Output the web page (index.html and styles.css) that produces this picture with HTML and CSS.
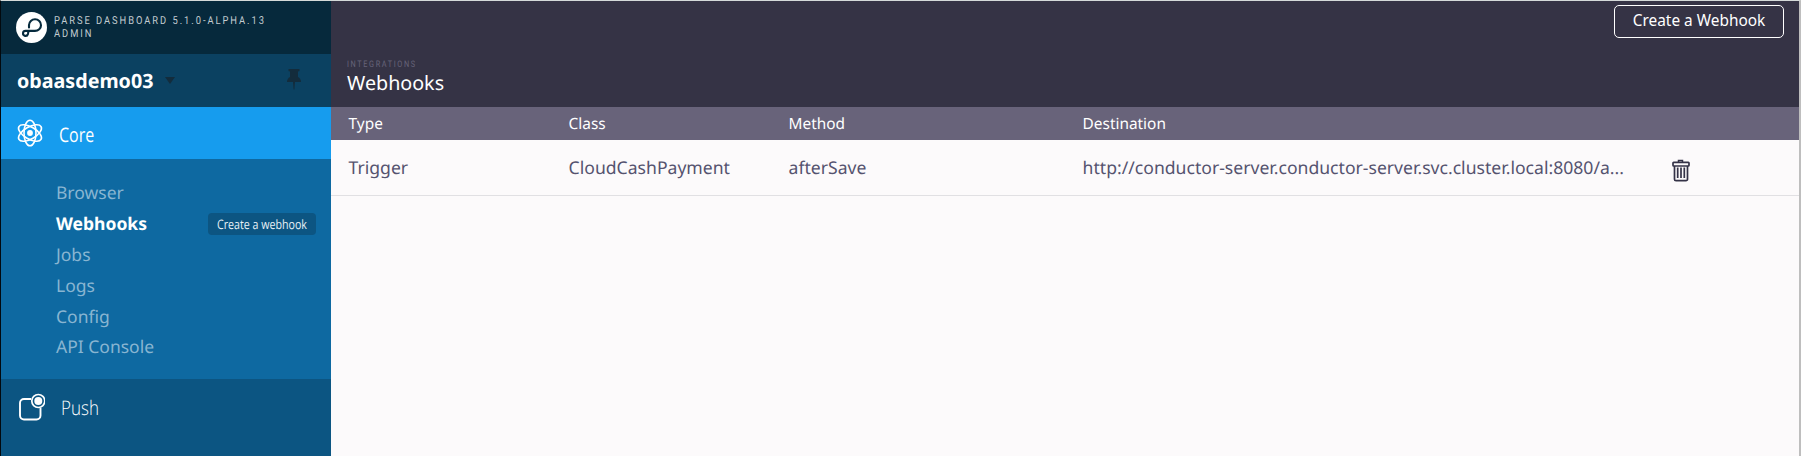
FILE: index.html
```
<!DOCTYPE html>
<html lang="en">
<head>
<meta charset="utf-8">
<title>Webhooks - Parse Dashboard</title>
<link rel="stylesheet" href="styles.css">
</head>
<body>
<div class="window">
  <aside class="sidebar">
    <header class="brand">
      <svg class="brand-logo" viewBox="0 0 31 31" width="31" height="31">
        <circle cx="15.500" cy="15.500" r="15.500" fill="#fff"/>
        <path d="M13 15.500V13a6 5.800 0 1 1 6 5.900H9.500a2.500 2.500 0 1 0 2.400 3.200Q12.300 20.500 12.500 19" fill="none" stroke="#062a3d" stroke-width="2.100" stroke-linecap="round" stroke-linejoin="round"/>
      </svg>
      <div class="brand-text"><span class="version">PARSE DASHBOARD 5.1.0-ALPHA.13</span><span class="role">ADMIN</span></div>
    </header>
    <div class="app">
      <span class="app-name">obaasdemo03</span>
      <svg class="caret" width="10" height="7" viewBox="0 0 10 7"><path d="M0 0h10L5 7z" fill="#132c3c"/></svg>
      <svg class="pin" width="14" height="21" viewBox="0 0 14 21"><path d="M1.500 0h11v2l-1.500.6V8c1.800 1 3 2.600 3 5H8l-.6 7.500h-.8L6 13H0c0-2.400 1.200-4 3-5V2.600L1.500 2z" fill="#132c3c"/></svg>
    </div>
    <div class="section core">
      <svg class="section-icon" width="28" height="28" viewBox="0 0 28 28" fill="none" stroke="#fff" stroke-width="1.600">
        <ellipse cx="14" cy="14" rx="6" ry="12.800"/>
        <ellipse cx="14" cy="14" rx="6" ry="12.800" transform="rotate(60 14 14)"/>
        <ellipse cx="14" cy="14" rx="6" ry="12.800" transform="rotate(-60 14 14)"/>
        <circle cx="14" cy="14" r="2.900" fill="#fff" stroke="none"/>
      </svg>
      <span class="section-name core-name">Core</span>
    </div>
    <nav class="menu">
      <a class="item">Browser</a>
      <a class="item active">Webhooks <span class="action"><span class="action-label">Create a webhook</span></span></a>
      <a class="item">Jobs</a>
      <a class="item">Logs</a>
      <a class="item">Config</a>
      <a class="item">API Console</a>
    </nav>
    <div class="section push">
      <svg class="section-icon" width="28" height="28" viewBox="0 0 28 28" fill="none" stroke="#fff">
        <path d="M14 6H7a4 4 0 0 0-4 4v12.500a4 4 0 0 0 4 4h12.500a4 4 0 0 0 4-4V15" stroke-width="1.900"/>
        <circle cx="21.300" cy="8" r="6.500" stroke-width="1.700" fill="#0c5582"/>
        <circle cx="21.300" cy="8" r="4" fill="#fff" stroke="none"/>
      </svg>
      <span class="section-name push-name">Push</span>
    </div>
  </aside>
  <main class="content">
    <header class="toolbar">
      <div class="titles"><div class="eyebrow">INTEGRATIONS</div><h1 class="title">Webhooks</h1></div>
      <button class="create">Create a Webhook</button>
    </header>
    <div class="row head"><span>Type</span><span>Class</span><span>Method</span><span>Destination</span></div>
    <div class="row data">
      <span>Trigger</span><span>CloudCashPayment</span><span>afterSave</span><span class="url">http://conductor-server.conductor-server.svc.cluster.local:8080/a...</span>
      <svg class="trash" width="18" height="23" viewBox="0 0 18 23" fill="none" stroke="#343247" stroke-width="1.700">
        <path d="M6.500 3V1.500h4V3" stroke-width="1.500"/>
        <rect x="1" y="3.300" width="16" height="3.700" rx=".7"/>
        <path d="M2.500 7v13.200a1.500 1.500 0 0 0 1.500 1.500h10a1.500 1.500 0 0 0 1.500-1.500V7M5.700 8.500v10.500M9 8.500v10.500M12.300 8.500v10.500"/>
      </svg>
    </div>
  </main>
</div>
</body>
</html>
```
FILE: styles.css
```
* { box-sizing: border-box; }
body { margin: 0; font-family: "Noto Sans", sans-serif; background: #fcfafb; text-rendering: geometricPrecision; }
.window { display: flex; height: 456px; border-top: 1px solid #d5dad9; border-left: 1px solid #02090e; border-right: 2px solid #bebebe; overflow: hidden; }
.sidebar { width: 330px; flex: none; display: flex; flex-direction: column; background: #0c5582; }
.brand { height: 53px; background: #06293c; display: flex; padding: 11px 0 0 15px; gap: 7px; }
.brand-logo { flex: none; }
.brand-text { display: flex; flex-direction: column; padding-top: 2px; font-family: Roboto, sans-serif; font-size: 11px; line-height: 13px; color: #c3ccd1; white-space: nowrap; }
.version, .role { letter-spacing: 2.300px; transform: scaleX(.85); transform-origin: left; }
.app { height: 53px; background: #0b4161; display: flex; align-items: center; padding: 0 30px 0 16px; }
.app-name { font-size: 19.700px; font-weight: 700; color: #fff; line-height: 28px; }
.caret { margin-left: 12px; }
.pin { margin: -3px 0 0 auto; }
.section { display: flex; align-items: flex-start; padding-left: 15px; color: #fff; font-family: "Open Sans", sans-serif; }
.section-icon { flex: none; }
.section-name { font-size: 20px; line-height: 28px; transform-origin: left; }
.core { height: 52px; flex: none; background: #169cee; padding-top: 12px; }
.core-name { margin: 2px 0 0 15px; transform: scaleX(.8); font-weight: 500; }
.menu { height: 220px; flex: none; background: #0e69a1; padding: 19px 15px 0 55px; }
.item { height: 30.800px; display: flex; align-items: center; justify-content: space-between; font-size: 17.500px; color: #88b5d1; }
.active { font-weight: 700; color: #fff; }
.action { width: 108px; height: 22px; border-radius: 4px; background: #0c5582; padding-left: 9px; font: 400 13px/22px "Open Sans", sans-serif; color: #e8f1f6; white-space: nowrap; }
.action-label { display: inline-block; transform-origin: left; transform: scaleX(.82); }
.push { flex: 1; padding: 14px 0 0 16px; }
.push-name { margin: 1px 0 0 16px; font-weight: 300; transform: scaleX(.85); }
.content { flex: 1; min-width: 0; background: #fcfafb; }
.toolbar { height: 106px; background: #353345; display: flex; justify-content: space-between; padding: 4px 15px 0 16px; }
.titles { padding-top: 55px; }
.eyebrow { font: 9px/11px Roboto, sans-serif; letter-spacing: 2px; color: #67647a; transform: scaleX(.81); transform-origin: left; }
.title { margin: 0; font-size: 19.700px; line-height: 24px; font-weight: 400; color: #fff; }
.create { width: 170px; height: 33px; border: 1px solid #fff; border-radius: 5px; background: none; color: #fff; font: 15.400px/20px "Noto Sans", sans-serif; padding: 0 0 1px; }
.row { display: grid; grid-template-columns: 220px 220px 294px 589px 1fr; align-items: center; padding-left: 17.600px; white-space: nowrap; }
.head { height: 33px; background: #68637a; color: #fff; font-size: 15.400px; }
.data { height: 56px; border-bottom: 1px solid #e1e0e3; color: #55536f; font-size: 17.600px; }
.url { overflow: hidden; }
.trash { margin-top: 5px; }
```
